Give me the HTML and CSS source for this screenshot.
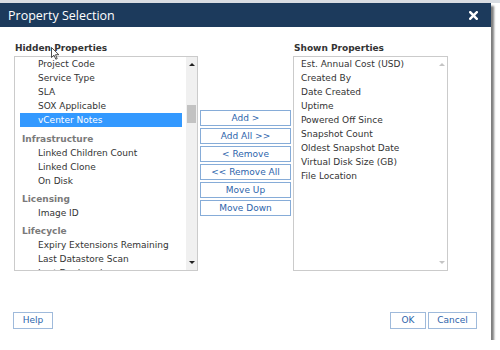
FILE: index.html
```html
<!DOCTYPE html>
<html lang="en">
<head>
    <meta charset="UTF-8">
    <meta name="viewport" content="width=device-width, initial-scale=1.0">
    <title>Property Selection</title>
    <link rel="stylesheet" href="styles.css">
</head>
<body>
    <div class="dialog">
        <div class="titlebar">
            <span class="title">Property Selection</span>
            <svg class="close" width="9" height="9" viewBox="0 0 9 9">
                <path d="M1.2 1.2 L7.8 7.8 M7.8 1.2 L1.2 7.8" stroke="#fff" stroke-width="2.4" stroke-linecap="square"/>
            </svg>
        </div>

        <div class="content">
            <div class="panes">
                <div class="pane pane-left">
                    <div class="label">Hidden Properties</div>
                    <div class="listbox">
                        <div class="items items-left">
                            <div class="opt">Project Code</div>
                            <div class="opt">Service Type</div>
                            <div class="opt">SLA</div>
                            <div class="opt">SOX Applicable</div>
                            <div class="opt selected">vCenter Notes</div>
                            <div class="group group-first">Infrastructure</div>
                            <div class="opt">Linked Children Count</div>
                            <div class="opt">Linked Clone</div>
                            <div class="opt">On Disk</div>
                            <div class="group">Licensing</div>
                            <div class="opt">Image ID</div>
                            <div class="group">Lifecycle</div>
                            <div class="opt">Expiry Extensions Remaining</div>
                            <div class="opt">Last Datastore Scan</div>
                            <div class="opt">Last Deployed</div>
                        </div>
                        <div class="scrollbar">
                            <span class="arrow arrow-up"></span>
                            <span class="thumb"></span>
                            <span class="spacer"></span>
                            <span class="arrow arrow-down"></span>
                        </div>
                    </div>
                </div>

                <div class="actions">
                    <button class="btn">Add &gt;</button>
                    <button class="btn">Add All &gt;&gt;</button>
                    <button class="btn">&lt; Remove</button>
                    <button class="btn">&lt;&lt; Remove All</button>
                    <button class="btn">Move Up</button>
                    <button class="btn">Move Down</button>
                </div>

                <div class="pane pane-right">
                    <div class="label">Shown Properties</div>
                    <div class="listbox">
                        <div class="items items-right">
                            <div class="opt">Est. Annual Cost (USD)</div>
                            <div class="opt">Created By</div>
                            <div class="opt">Date Created</div>
                            <div class="opt">Uptime</div>
                            <div class="opt">Powered Off Since</div>
                            <div class="opt">Snapshot Count</div>
                            <div class="opt">Oldest Snapshot Date</div>
                            <div class="opt">Virtual Disk Size (GB)</div>
                            <div class="opt">File Location</div>
                        </div>
                        <div class="scrollbar scrollbar-off">
                            <span class="arrow arrow-up"></span>
                            <span class="spacer"></span>
                            <span class="arrow arrow-down"></span>
                        </div>
                    </div>
                </div>
            </div>

            <div class="footer">
                <button class="btn btn-foot btn-help">Help</button>
                <div class="footer-right">
                    <button class="btn btn-foot btn-ok">OK</button>
                    <button class="btn btn-foot btn-cancel">Cancel</button>
                </div>
            </div>
        </div>

        <svg class="cursor" width="9" height="13" viewBox="0 0 9 13">
            <path d="M0.5 0.5 L0.5 10.5 L3 8.2 L4.8 12.2 L6.2 11.6 L4.5 7.7 L7.8 7.7 Z" fill="#fff" stroke="#222" stroke-width="0.8"/>
        </svg>
    </div>
</body>
</html>
```

FILE: styles.css
```css
body{
    margin: 0;
    background-color: #fff;
    border-top: 3px solid #d9dde3;
    font-family: "DejaVu Sans", Verdana, sans-serif;
    font-size: 9px;
    color: #333;
}

.dialog{
    position: relative;
    width: 491px;
    height: 337px;
    background-color: #fff;
    box-shadow: 3px 3px 2px rgba(0, 0, 0, 0.5);
}

.titlebar{
    height: 24px;
    background-color: #1c3a5c;
    display: flex;
    align-items: center;
    justify-content: space-between;
    padding: 0 13px 0 8px;
}

.title{
    font-family: "Open Sans", sans-serif;
    font-size: 12.5px;
    color: #fff;
    padding-top: 1px;
}

.close{
    display: block;
}

.content{
    padding: 16px 14px 0 13px;
}

.panes{
    display: flex;
    gap: 2px;
    margin-left: 1px;
}

.pane-left{
    width: 184px;
}

.pane-right{
    width: 155px;
}

.label{
    font-weight: bold;
    line-height: 11px;
    height: 11px;
    margin-bottom: 2px;
    padding-left: 1px;
    color: #333;
}

.listbox{
    height: 215px;
    box-sizing: border-box;
    border: 1px solid #cbcbcb;
    display: flex;
    overflow: hidden;
}

.items{
    flex: 1;
}

.items-left{
    padding: 0 4px 0 5px;
}

.items-right{
    padding: 0 0 0 7px;
}

.opt{
    height: 14px;
    line-height: 14px;
    white-space: nowrap;
}

.items-left .opt{
    padding-left: 18px;
}

.opt.selected{
    background-color: #3399ff;
    color: #fff;
}

.group{
    height: 14px;
    line-height: 14px;
    margin-top: 4px;
    padding-left: 2px;
    font-weight: bold;
    color: #7a7a7a;
}

.group-first{
    margin-top: 5px;
}

.scrollbar{
    width: 11px;
    background-color: #f0f0f0;
    display: flex;
    flex-direction: column;
    align-items: center;
}

.scrollbar-off{
    background-color: #fff;
}

.arrow{
    width: 0;
    height: 0;
    margin: 6px 0;
    border-left: 3px solid transparent;
    border-right: 3px solid transparent;
}

.arrow-up{
    border-bottom: 3px solid #222;
}

.arrow-down{
    border-top: 3px solid #222;
}

.scrollbar-off .arrow-up{
    border-bottom-color: #c4c4c4;
}

.scrollbar-off .arrow-down{
    border-top-color: #c4c4c4;
}

.thumb{
    width: 9px;
    height: 18px;
    margin-top: 33px;
    background-color: #c2c2c2;
}

.spacer{
    flex: 1;
}

.actions{
    width: 91px;
    margin-top: 67px;
    display: flex;
    flex-direction: column;
    gap: 2px;
}

.btn{
    font-family: "DejaVu Sans", Verdana, sans-serif;
    font-size: 9px;
    line-height: 14px;
    height: 16px;
    padding: 0;
    color: #2d64ab;
    background-color: #fff;
    border: 1px solid #86acd8;
    border-radius: 0;
}

.footer{
    margin-top: 41px;
    display: flex;
    justify-content: space-between;
}

.btn-foot{
    height: 17px;
    line-height: 15px;
    border-color: #9fbadb;
}

.btn-help{
    width: 40px;
}

.footer-right{
    display: flex;
    gap: 2px;
}

.btn-ok{
    width: 36px;
}

.btn-cancel{
    width: 49px;
}

.cursor{
    position: absolute;
    left: 51px;
    top: 44px;
}
```
